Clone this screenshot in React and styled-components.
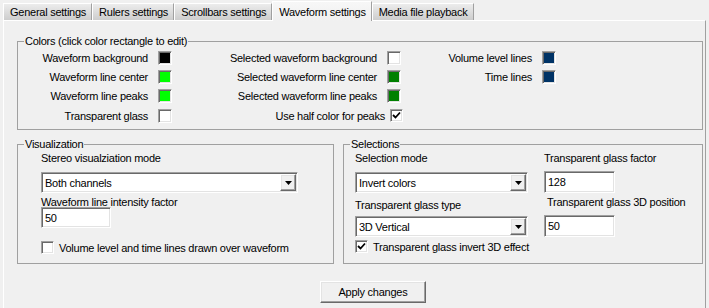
import React from "react";
import styled, { css, createGlobalStyle } from "styled-components";

const GlobalStyle = createGlobalStyle`
  html, body {
    margin: 0;
    padding: 0;
    background: #f0f0f0;
  }
  body {
    font-family: "Liberation Sans", Arial, sans-serif;
    font-size: 11px;
    letter-spacing: -0.25px;
    color: #000;
  }
`;

const sunken = css`
  box-sizing: border-box;
  border: 1px solid;
  border-color: #a0a0a0 #fff #fff #a0a0a0;
  box-shadow: inset 1px 1px 0 #696969, inset -1px -1px 0 #e3e3e3;
`;

const raised = css`
  box-sizing: border-box;
  border: 1px solid;
  border-color: #fff #696969 #696969 #fff;
  box-shadow: inset -1px -1px 0 #a0a0a0, inset 1px 1px 0 #e3e3e3;
`;

const Window = styled.div`
  width: 709px;
  height: 308px;
  box-sizing: border-box;
  padding: 1px 3px 0 3px;
  display: flex;
  flex-direction: column;
  overflow: hidden;
`;

const TabStrip = styled.div`
  display: flex;
  align-items: flex-end;
  height: 19px;
  position: relative;
  z-index: 1;
`;

const Tab = styled.div`
  box-sizing: border-box;
  display: flex;
  align-items: center;
  padding: 0 5px 0 6px;
  white-space: nowrap;
  border-top: 1px solid #fff;
  border-left: 1px solid #fff;
  border-right: 1px solid #a0a0a0;
  height: ${p => (p.$active ? 20 : 17)}px;
  margin-bottom: ${p => (p.$active ? -1 : 0)}px;
  background: ${p => (p.$active
    ? "linear-gradient(#f7f7f7, #f0f0f0)"
    : "linear-gradient(#ececec, #cdcdcd)")};
`;

const Panel = styled.div`
  flex: 1;
  border-top: 1px solid #fff;
  border-left: 1px solid #fff;
  border-right: 1px solid #a0a0a0;
  padding: 14px 2px 0 13px;
  display: flex;
  flex-direction: column;
`;

const Group = styled.fieldset`
  margin: 0;
  padding: 0;
  min-width: 0;
  border: 1px solid #a0a0a0;
`;

const Legend = styled.legend`
  margin-left: 6px;
  padding: 0 1px;
  line-height: 13px;
`;

const ColorsGrid = styled.div`
  display: grid;
  grid-template-columns: 154px 229px 155px;
  grid-template-rows: 18px 19px 20px 19px;
  align-items: center;
  padding: 1px 0 4px 0;
`;

const ColorItem = styled.div`
  display: flex;
  justify-content: flex-end;
  align-items: center;
  gap: ${p => p.$gap || 10}px;
  margin-right: ${p => p.$shift || 0}px;
  white-space: nowrap;
`;

const Swatch = styled.div`
  ${sunken};
  width: 14px;
  height: 14px;
  background: ${p => p.$color};
`;

const BottomRow = styled.div`
  display: grid;
  grid-template-columns: 317px 1fr;
  column-gap: 9px;
  margin-top: 8px;
`;

const GroupBody = styled.div`
  padding: 1px 0 9px ${p => p.$left}px;
  display: flex;
  flex-direction: column;
  align-items: flex-start;
`;

const SelGrid = styled.div`
  display: grid;
  grid-template-columns: 173px auto;
  column-gap: 16px;
  padding: 1px 0 9px 11px;
`;

const Column = styled.div`
  display: flex;
  flex-direction: column;
  align-items: flex-start;
`;

const Label = styled.div`
  line-height: ${p => p.$lh || 13}px;
  margin-top: ${p => p.$top || 0}px;
  margin-left: ${p => p.$indent || 0}px;
  white-space: nowrap;
`;

const Combo = styled.div`
  ${sunken};
  width: ${p => p.$w}px;
  height: 21px;
  margin-top: ${p => p.$top || 0}px;
  background: #fff;
  display: flex;
  align-items: center;
  justify-content: space-between;
  padding: 0 1px 0 3px;
`;

const DropButton = styled.div`
  ${raised};
  width: 16px;
  height: 17px;
  background: #f0f0f0;
  display: flex;
  align-items: center;
  justify-content: center;
`;

const TextBox = styled.div`
  ${sunken};
  width: ${p => p.$w}px;
  height: ${p => p.$h || 21}px;
  margin-top: ${p => p.$top || 0}px;
  background: #fff;
  display: flex;
  align-items: center;
  padding-left: 3px;
`;

const CheckRow = styled.div`
  display: flex;
  align-items: center;
  gap: 5px;
  margin-top: ${p => p.$top || 0}px;
  white-space: nowrap;
`;

const Box = styled.div`
  ${sunken};
  width: 13px;
  height: 13px;
  background: #fff;
  display: flex;
  align-items: center;
  justify-content: center;
`;

const Footer = styled.div`
  display: flex;
  justify-content: center;
  padding-left: 26px;
  margin-top: 17px;
`;

const Button = styled.button`
  ${raised};
  font: inherit;
  letter-spacing: inherit;
  color: #000;
  width: 106px;
  height: 22px;
  padding: 0;
  background: #f0f0f0;
`;

const Arrow = () => (
  <svg width="7" height="4" viewBox="0 0 7 4">
    <polygon points="0,0 7,0 3.5,4" fill="#000" />
  </svg>
);

const Check = ({ checked }) => (
  <Box>
    {checked && (
      <svg width="9" height="9" viewBox="0 0 9 9">
        <path d="M1 4 L3.5 6.5 L8 1.5" stroke="#000" strokeWidth="1.8" fill="none" />
      </svg>
    )}
  </Box>
);

const Select = ({ w, top, value }) => (
  <Combo $w={w} $top={top}>
    <span>{value}</span>
    <DropButton><Arrow /></DropButton>
  </Combo>
);

const tabs = ["General settings", "Rulers settings", "Scrollbars settings", "Waveform settings", "Media file playback"];

const App = () => {
  return (
    <Window>
      <GlobalStyle />
      <TabStrip>
        {tabs.map(t => (
          <Tab key={t} $active={t === "Waveform settings"}>{t}</Tab>
        ))}
      </TabStrip>
      <Panel>
        <Group>
          <Legend>Colors (click color rectangle to edit)</Legend>
          <ColorsGrid>
            <ColorItem>Waveform background<Swatch $color="#000" /></ColorItem>
            <ColorItem>Selected waveform background<Swatch $color="#fff" /></ColorItem>
            <ColorItem>Volume level lines<Swatch $color="#003366" /></ColorItem>

            <ColorItem>Waveform line center<Swatch $color="#00ff00" /></ColorItem>
            <ColorItem>Selected waveform line center<Swatch $color="#008000" /></ColorItem>
            <ColorItem>Time lines<Swatch $color="#003366" /></ColorItem>

            <ColorItem>Waveform line peaks<Swatch $color="#00ff00" /></ColorItem>
            <ColorItem>Selected waveform line peaks<Swatch $color="#008000" /></ColorItem>
            <div />

            <ColorItem>Transparent glass<Swatch $color="#fff" /></ColorItem>
            <ColorItem $gap={5} $shift={-2}>Use half color for peaks<Check checked /></ColorItem>
            <div />
          </ColorsGrid>
        </Group>

        <BottomRow>
          <Group>
            <Legend>Visualization</Legend>
            <GroupBody $left={23}>
              <Label>Stereo visualziation mode</Label>
              <Select w={257} top={7} value="Both channels" />
              <Label $top={3} $lh={12}>Waveform line intensity factor</Label>
              <TextBox $w={70} $top={-1}>50</TextBox>
              <CheckRow $top={13}>
                <Check />
                <span>Volume level and time lines drawn over waveform</span>
              </CheckRow>
            </GroupBody>
          </Group>

          <Group>
            <Legend>Selections</Legend>
            <SelGrid>
              <Column>
                <Label>Selection mode</Label>
                <Select w={173} top={7} value="Invert colors" />
                <Label $top={6}>Transparent glass type</Label>
                <Select w={173} top={4} value="3D Vertical" />
                <CheckRow $top={3}>
                  <Check checked />
                  <span>Transparent glass invert 3D effect</span>
                </CheckRow>
              </Column>
              <Column>
                <Label>Transparent glass factor</Label>
                <TextBox $w={71} $h={22} $top={6}>128</TextBox>
                <Label $top={3} $indent={3}>Transparent glass 3D position</Label>
                <TextBox $w={71} $h={22} $top={6}>50</TextBox>
              </Column>
            </SelGrid>
          </Group>
        </BottomRow>

        <Footer>
          <Button>Apply changes</Button>
        </Footer>
      </Panel>
    </Window>
  );
};

export default App;
